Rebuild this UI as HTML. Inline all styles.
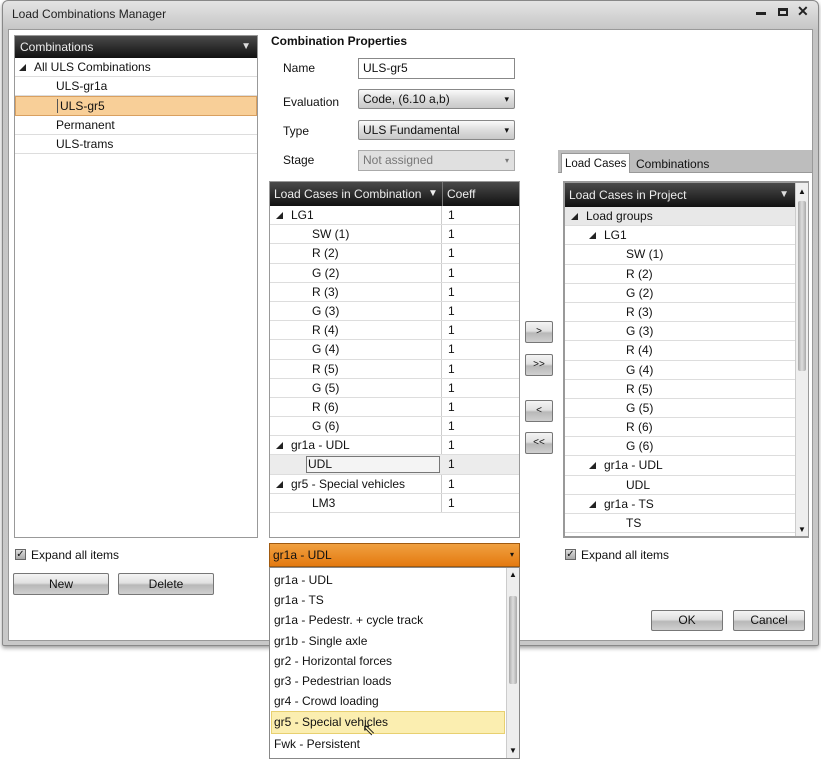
<!DOCTYPE html>
<html><head><meta charset="utf-8">
<style>
*{box-sizing:border-box;margin:0;padding:0}
body{width:821px;height:759px;background:#fff;font-family:"Liberation Sans",sans-serif;font-size:12px;color:#111;position:relative;overflow:hidden}
.a{position:absolute}
.win{left:2px;top:0;width:817px;height:646px;background:linear-gradient(#e4e4e4,#c4c4c4 30px,#c8c8c8);border:1px solid #888;border-radius:6px 6px 2px 2px;box-shadow:0 2px 4px rgba(0,0,0,.4)}
.content{left:8px;top:29px;width:805px;height:612px;background:#fff;border:1px solid #999}
.hdr{background:linear-gradient(#4a4a4a,#111);color:#eee;height:24px;line-height:24px;padding-left:5px;font-size:12px;white-space:nowrap}
.row{height:19.2px;line-height:19px;border-bottom:1px solid #ddd;white-space:nowrap;position:relative}
.tri{display:inline-block;width:0;height:0;border-left:7px solid transparent;border-bottom:7px solid #222;margin-right:8px;vertical-align:0}
.btn{background:linear-gradient(#f4f4f4,#e0e0e0 45%,#b8b8b8 55%,#d0d0d0);border:1px solid #777;border-radius:2px;text-align:center;font-size:12px}
.cb{width:11px;height:11px;border:1px solid #666;background:linear-gradient(#ddd,#aaa);font-size:10px;line-height:9px;text-align:center;color:#111}
.combo{background:linear-gradient(#fafafa,#ddd 50%,#c8c8c8);border:1px solid #888;height:20px;line-height:18px;padding-left:4px;border-radius:2px}
.combo:after{content:"▾";position:absolute;right:5px;top:0;font-size:9px}
.filt{position:absolute;right:6px;top:0;font-size:10px;color:#ddd}
</style></head><body>
<div class="a win"></div>
<div class="a" style="left:12px;top:7px;font-size:12px;color:#222">Load Combinations Manager</div>
<div class="a" style="left:756px;top:12px;width:10px;height:3px;background:#222"></div>
<div class="a" style="left:778px;top:8px;width:10px;height:8px;border:2px solid #222;border-top-width:3px"></div>
<div class="a" style="left:797px;top:3px;font-size:14px;font-weight:bold;color:#222">✕</div>
<div class="a content"></div>

<!-- left panel -->
<div class="a" style="left:14px;top:35px;width:244px;height:503px;border:1px solid #999;background:#fff">
 <div class="hdr" style="height:22px;line-height:22px;position:relative">Combinations<span class="filt">▼</span></div>
 <div class="row" style="padding-left:4px"><span class="tri"></span>All ULS Combinations</div>
 <div class="row" style="padding-left:41px">ULS-gr1a</div>
 <div class="row" style="padding-left:41px;background:#f8cf98;border:1px solid #d9a060"><span style="border:1px solid #555;border-width:0 0 0 1px;padding-left:2px">ULS-gr5</span></div>
 <div class="row" style="padding-left:41px">Permanent</div>
 <div class="row" style="padding-left:41px">ULS-trams</div>
</div>
<div class="a cb" style="left:15px;top:549px">✓</div>
<div class="a" style="left:31px;top:548px">Expand all items</div>
<div class="a btn" style="left:13px;top:573px;width:96px;height:22px;line-height:20px">New</div>
<div class="a btn" style="left:118px;top:573px;width:96px;height:22px;line-height:20px">Delete</div>

<!-- properties -->
<div class="a" style="left:271px;top:34px;font-weight:bold">Combination Properties</div>
<div class="a" style="left:283px;top:61px">Name</div>
<div class="a" style="left:358px;top:58px;width:157px;height:21px;border:1px solid #888;line-height:19px;padding-left:4px;background:#fff">ULS-gr5</div>
<div class="a" style="left:283px;top:95px">Evaluation</div>
<div class="a combo" style="left:358px;top:89px;width:157px">Code, (6.10 a,b)</div>
<div class="a" style="left:283px;top:124px">Type</div>
<div class="a combo" style="left:358px;top:120px;width:157px">ULS Fundamental</div>
<div class="a" style="left:283px;top:153px">Stage</div>
<div class="a" style="left:358px;top:150px;width:157px;height:21px;border:1px solid #aaa;background:#e0e0e0;color:#777;line-height:19px;padding-left:4px">Not assigned<span style="position:absolute;right:5px;font-size:8px">▾</span></div>

<!-- middle grid -->
<div class="a" style="left:269px;top:181px;width:251px;height:357px;border:1px solid #999;background:#fff">
 <div class="hdr" style="position:relative;padding-left:4px">Load Cases in Combination<span style="position:absolute;left:158px;font-size:10px">▼</span><span style="position:absolute;left:172px;top:0;bottom:0;border-left:1px solid #777;padding-left:4px">Coeff</span></div>
 <div style="position:absolute;left:171px;top:24px;bottom:24px;border-left:1px solid #ccc"></div>
 <div class="row" style="padding-left:6px"><span class="tri"></span>LG1<span class="a" style="left:178px">1</span></div>
 <div class="row" style="padding-left:42px">SW (1)<span class="a" style="left:178px">1</span></div>
 <div class="row" style="padding-left:42px">R (2)<span class="a" style="left:178px">1</span></div>
 <div class="row" style="padding-left:42px">G (2)<span class="a" style="left:178px">1</span></div>
 <div class="row" style="padding-left:42px">R (3)<span class="a" style="left:178px">1</span></div>
 <div class="row" style="padding-left:42px">G (3)<span class="a" style="left:178px">1</span></div>
 <div class="row" style="padding-left:42px">R (4)<span class="a" style="left:178px">1</span></div>
 <div class="row" style="padding-left:42px">G (4)<span class="a" style="left:178px">1</span></div>
 <div class="row" style="padding-left:42px">R (5)<span class="a" style="left:178px">1</span></div>
 <div class="row" style="padding-left:42px">G (5)<span class="a" style="left:178px">1</span></div>
 <div class="row" style="padding-left:42px">R (6)<span class="a" style="left:178px">1</span></div>
 <div class="row" style="padding-left:42px">G (6)<span class="a" style="left:178px">1</span></div>
 <div class="row" style="padding-left:6px"><span class="tri"></span>gr1a - UDL<span class="a" style="left:178px">1</span></div>
 <div class="row" style="padding-left:38px;background:#ececec"><span class="a" style="left:36px;top:1px;width:134px;height:17px;border:1px solid #777;background:#f4f4f4"></span><span style="position:relative">UDL</span><span class="a" style="left:178px">1</span></div>
 <div class="row" style="padding-left:6px"><span class="tri"></span>gr5 - Special vehicles<span class="a" style="left:178px">1</span></div>
 <div class="row" style="padding-left:42px">LM3<span class="a" style="left:178px">1</span></div>
</div>

<!-- arrow buttons -->
<div class="a btn" style="left:525px;top:321px;width:28px;height:22px;line-height:20px;font-size:10px">&gt;</div>
<div class="a btn" style="left:525px;top:354px;width:28px;height:22px;line-height:20px;font-size:10px">&gt;&gt;</div>
<div class="a btn" style="left:525px;top:400px;width:28px;height:22px;line-height:20px;font-size:10px">&lt;</div>
<div class="a btn" style="left:525px;top:432px;width:28px;height:22px;line-height:20px;font-size:10px">&lt;&lt;</div>

<!-- right panel -->
<div class="a" style="left:558px;top:150px;width:254px;height:23px;background:#bdbdbd;border-bottom:1px solid #999"></div>
<div class="a" style="left:561px;top:153px;width:69px;height:21px;background:#fff;border:1px solid #999;border-bottom:none;line-height:20px;padding-left:3px;white-space:nowrap;font-size:11.5px">Load Cases</div>
<div class="a" style="left:636px;top:157px;white-space:nowrap">Combinations</div>
<div class="a" style="left:558px;top:173px;width:254px;height:370px;background:#fff"></div>
<div class="a" style="left:563px;top:181px;width:246px;height:357px;border:2px solid #999;border-right:1px solid #999;background:#fff;overflow:hidden">
 <div style="position:absolute;right:0;top:0;width:13px;height:100%;background:#eee;border-left:1px solid #ccc">
  <div style="font-size:8px;text-align:center;margin-top:4px">▲</div>
  <div style="position:absolute;left:2px;top:18px;width:8px;height:170px;background:linear-gradient(90deg,#aaa,#ddd,#aaa);border-radius:2px"></div>
  <div style="position:absolute;bottom:2px;width:100%;font-size:8px;text-align:center">▼</div>
 </div>
 <div style="margin-right:13px">
 <div class="hdr" style="position:relative;padding-left:4px">Load Cases in Project<span class="filt">▼</span></div>
 <div class="row" style="padding-left:6px;background:#e8e8e8"><span class="tri"></span>Load groups</div>
 <div class="row" style="padding-left:24px"><span class="tri"></span>LG1</div>
 <div class="row" style="padding-left:61px">SW (1)</div>
 <div class="row" style="padding-left:61px">R (2)</div>
 <div class="row" style="padding-left:61px">G (2)</div>
 <div class="row" style="padding-left:61px">R (3)</div>
 <div class="row" style="padding-left:61px">G (3)</div>
 <div class="row" style="padding-left:61px">R (4)</div>
 <div class="row" style="padding-left:61px">G (4)</div>
 <div class="row" style="padding-left:61px">R (5)</div>
 <div class="row" style="padding-left:61px">G (5)</div>
 <div class="row" style="padding-left:61px">R (6)</div>
 <div class="row" style="padding-left:61px">G (6)</div>
 <div class="row" style="padding-left:24px"><span class="tri"></span>gr1a - UDL</div>
 <div class="row" style="padding-left:61px">UDL</div>
 <div class="row" style="padding-left:24px"><span class="tri"></span>gr1a - TS</div>
 <div class="row" style="padding-left:61px">TS</div>
 </div>
</div>
<div class="a cb" style="left:565px;top:549px">✓</div>
<div class="a" style="left:581px;top:548px">Expand all items</div>
<div class="a btn" style="left:651px;top:610px;width:72px;height:21px;line-height:19px">OK</div>
<div class="a btn" style="left:733px;top:610px;width:72px;height:21px;line-height:19px">Cancel</div>

<!-- dropdown -->
<div class="a" style="left:269px;top:543px;width:251px;height:24px;background:linear-gradient(#f0a040,#e47a10);border:1px solid #a05a10;line-height:22px;padding-left:3px">gr1a - UDL<span style="position:absolute;right:5px;font-size:8px">▾</span></div>
<div class="a" style="left:269px;top:567px;width:251px;height:192px;background:#fff;border:1px solid #888;overflow:hidden;line-height:20.2px;padding-left:4px;padding-top:2px">
 <div>gr1a - UDL</div>
 <div>gr1a - TS</div>
 <div>gr1a - Pedestr. + cycle track</div>
 <div>gr1b - Single axle</div>
 <div>gr2 - Horizontal forces</div>
 <div>gr3 - Pedestrian loads</div>
 <div>gr4 - Crowd loading</div>
 <div style="background:#fbeeb0;border:1px solid #e8d070;margin-left:-3px;padding-left:2px;width:234px">gr5 - Special vehicles</div>
 <div>Fwk - Persistent</div>
 <div>Fwk - Execution</div>
 <div style="position:absolute;right:0;top:0;width:13px;height:100%;background:#eee;border-left:1px solid #ccc">
  <div style="font-size:8px;text-align:center;line-height:14px">▲</div>
  <div style="position:absolute;left:2px;top:28px;width:8px;height:88px;background:linear-gradient(90deg,#aaa,#ddd,#aaa);border-radius:2px"></div>
  <div style="position:absolute;bottom:0;width:100%;font-size:8px;text-align:center;line-height:14px">▼</div>
 </div>
</div>
<div class="a" style="left:362px;top:720px;font-size:16px">⇖</div>
</body></html>
